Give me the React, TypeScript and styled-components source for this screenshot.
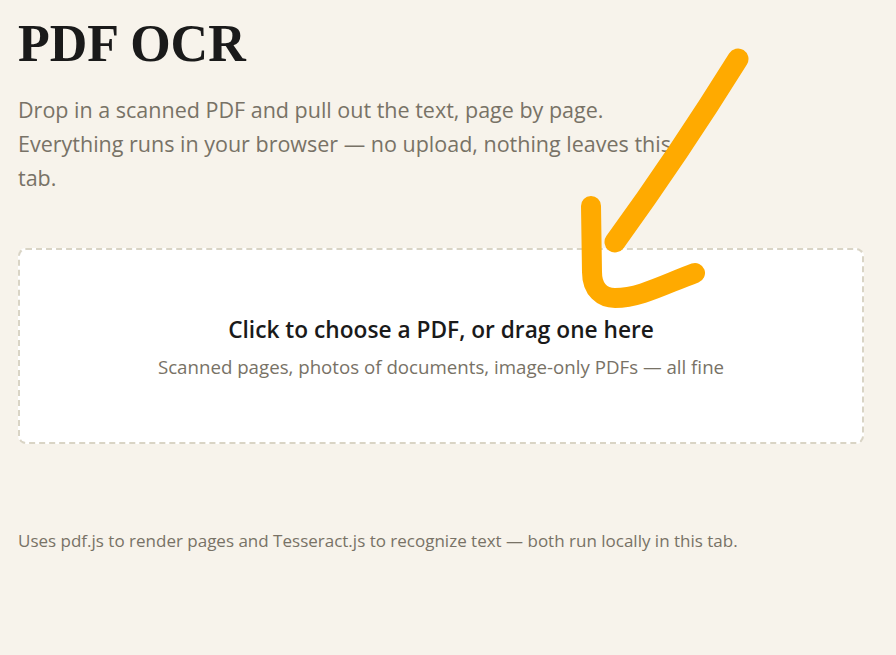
import React from "react";
import styled, { createGlobalStyle } from "styled-components";

const GlobalStyle = createGlobalStyle`
    html, body {
        margin: 0;
        padding: 0;
        background: #f7f3eb;
    }
    body {
        font-family: "Open Sans", sans-serif;
        color: #1a1a1a;
    }
`;

const Page = styled.main`
    position: relative;
    box-sizing: border-box;
    min-height: 655px;
    padding: 18px 32px 0 18px;
    overflow: hidden;
`;

const Title = styled.h1`
    margin: 0;
    font-family: "Liberation Serif", serif;
    font-size: 52px;
    line-height: 52px;
    font-weight: 700;
    color: #1a1a1a;
`;

const Lead = styled.p`
    margin: 23px 0 0;
    max-width: 660px;
    font-size: 21.5px;
    line-height: 34px;
    color: #787266;
`;

const DropZone = styled.div`
    margin-top: 53px;
    height: 196px;
    box-sizing: border-box;
    padding-top: 2px;
    display: flex;
    flex-direction: column;
    align-items: center;
    justify-content: center;
    background: #ffffff;
    border: 2px dashed #d9d4c5;
    border-radius: 8px;
    cursor: pointer;
`;

const DropTitle = styled.div`
    font-size: 22.7px;
    line-height: 30px;
    font-weight: 600;
    color: #1a1a1a;
`;

const DropHint = styled.div`
    margin-top: 9px;
    font-size: 18.7px;
    line-height: 26px;
    color: #787266;
`;

const Footnote = styled.p`
    margin: 85px 0 0;
    font-size: 17px;
    line-height: 24px;
    color: #787266;
`;

const Arrow = styled.svg`
    position: absolute;
    left: 0;
    top: 0;
    pointer-events: none;
`;

const App: React.FC = () => {
    return (
        <Page>
            <GlobalStyle />
            <Title>PDF OCR</Title>
            <Lead>
                Drop in a scanned PDF and pull out the text, page by page. Everything runs in your
                browser — no upload, nothing leaves this tab.
            </Lead>
            <DropZone>
                <DropTitle>Click to choose a PDF, or drag one here</DropTitle>
                <DropHint>Scanned pages, photos of documents, image-only PDFs — all fine</DropHint>
            </DropZone>
            <Footnote>
                Uses pdf.js to render pages and Tesseract.js to recognize text — both run locally in this tab.
            </Footnote>
            <Arrow width="896" height="655" viewBox="0 0 896 655" fill="none">
                <path
                    d="M738 59 C700 120 660 180 615 242"
                    stroke="#ffaa00"
                    strokeWidth="21"
                    strokeLinecap="round"
                />
                <path
                    d="M591 206 L592 272 C592 290 603 298 615 298 C640 298 665 284 695 273"
                    stroke="#ffaa00"
                    strokeWidth="20"
                    strokeLinecap="round"
                    strokeLinejoin="round"
                />
            </Arrow>
        </Page>
    );
};

export default App;
